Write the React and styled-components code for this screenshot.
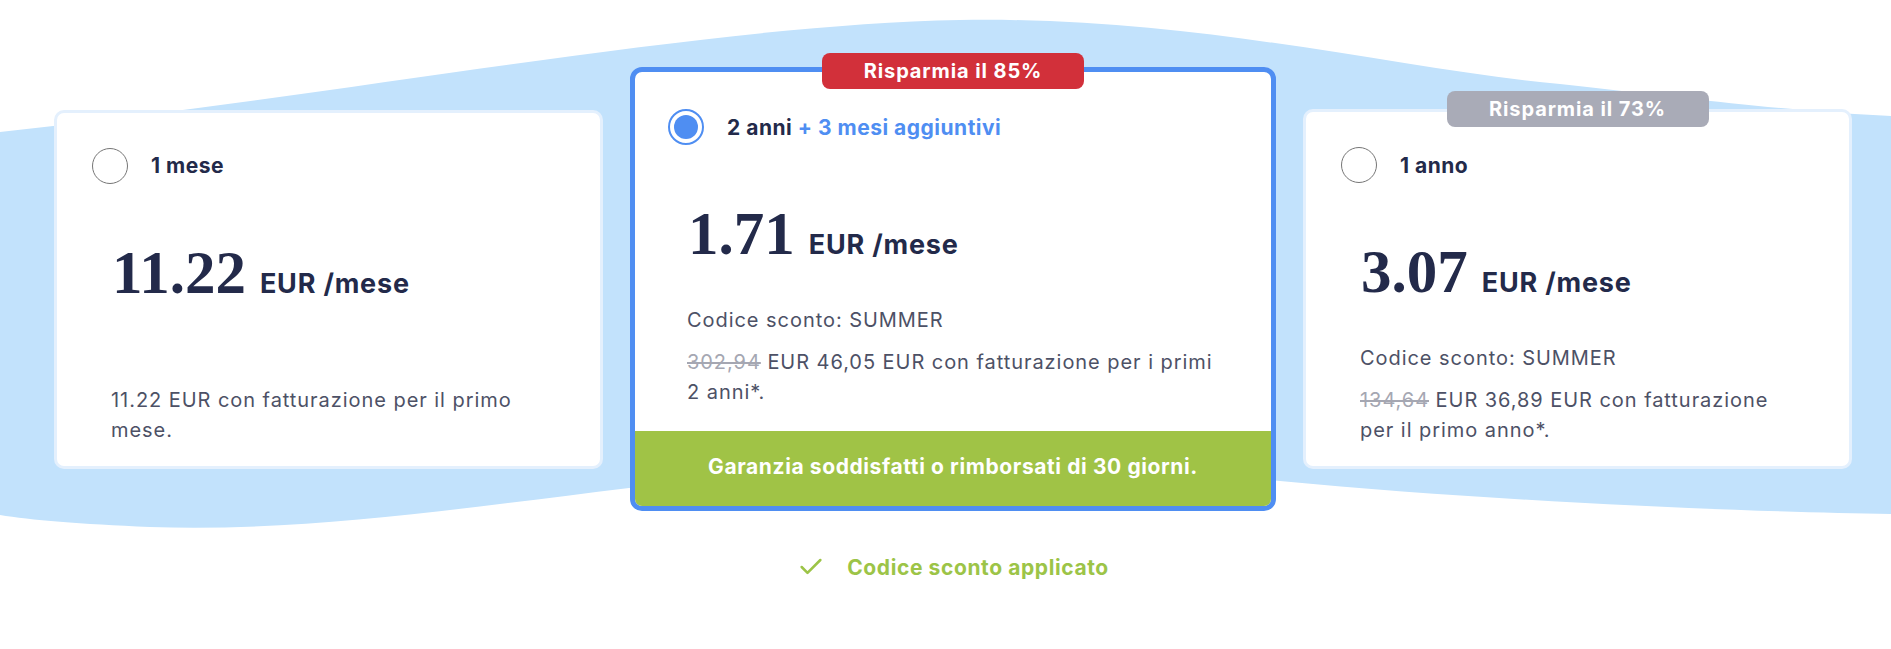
import React from "react";
import styled, { createGlobalStyle } from "styled-components";
import { Check } from "lucide-react";

const GlobalStyle = createGlobalStyle`
  * {
    box-sizing: border-box;
  }
  body {
    margin: 0;
    background: #fff;
    font-family: Inter, "Noto Sans", sans-serif;
    color: #232a4a;
  }
`;

const Page = styled.div`
  position: relative;
  height: 649px;
  overflow: hidden;
`;

// soft blue band that sweeps behind the plan cards
const Wave = styled.svg`
  position: absolute;
  inset: 0;
  width: 100%;
  height: 100%;
  z-index: 0;
`;

const Main = styled.div`
  position: relative;
  z-index: 1;
  width: fit-content;
  padding: 67px 0 0 54px;
`;

const Plans = styled.div`
  display: grid;
  grid-template-columns: 549px 646px 549px;
  column-gap: 27px;
  align-items: center;
`;

const Card = styled.div`
  position: relative;
  display: flex;
  flex-direction: column;
  min-height: ${(p) => (p.$selected ? "0" : "359px")};
  background: #fff;
  border: ${(p) => (p.$selected ? "5px solid #4f8ef2" : "3px solid #e4f0fd")};
  border-radius: ${(p) => (p.$selected ? "12px" : "10px")};
`;

const Badge = styled.div`
  position: absolute;
  top: ${(p) => (p.$tone === "red" ? "-19px" : "-21px")};
  left: 50%;
  transform: translateX(-50%);
  width: 262px;
  height: 36px;
  border-radius: 8px;
  background: ${(p) => (p.$tone === "red" ? "#d2303a" : "#a9abb7")};
  color: #fff;
  font-size: 20px;
  font-weight: 700;
  letter-spacing: 0.9px;
  display: flex;
  align-items: center;
  justify-content: center;
`;

const Content = styled.div`
  flex: 1;
  display: flex;
  flex-direction: column;
  padding: ${(p) => (p.$selected ? "37px 48px 24px 33px" : "35px 45px 21px 35px")};
`;

const Header = styled.label`
  display: flex;
  align-items: center;
  gap: 23px;
  height: 36px;
`;

const Radio = styled.span`
  flex: none;
  width: 36px;
  height: 36px;
  border-radius: 50%;
  border: ${(p) => (p.$checked ? "2px solid #4f8ef2" : "1.5px solid #767676")};
  display: grid;
  place-items: center;
  &::after {
    content: "";
    width: 24px;
    height: 24px;
    border-radius: 50%;
    background: ${(p) => (p.$checked ? "#4f8ef2" : "transparent")};
  }
`;

const Title = styled.span`
  font-size: 21px;
  font-weight: 700;
  letter-spacing: 0.5px;
  color: #232a4a;
`;

const Extra = styled.span`
  color: #4f8ef2;
`;

const PriceRow = styled.div`
  display: flex;
  align-items: baseline;
  gap: 14px;
  margin-top: 58px;
  padding-left: 20px;
  color: #232a4a;
`;

const Amount = styled.span`
  font-family: "Liberation Serif", "DejaVu Serif", serif;
  font-size: 61px;
  font-weight: 700;
  line-height: 1;
`;

const Unit = styled.span`
  font-size: 27px;
  font-weight: 700;
  letter-spacing: 0.8px;
  line-height: 1;
`;

const Details = styled.div`
  margin-top: ${(p) => (p.$bottom ? "auto" : "41px")};
  padding-left: 19px;
`;

const Line = styled.p`
  margin: 0;
  font-size: 20px;
  line-height: 30px;
  letter-spacing: 0.95px;
  color: #4d5166;
  & + & {
    margin-top: 12px;
  }
`;

const Old = styled.s`
  color: #a5a7b2;
`;

const Guarantee = styled.div`
  height: 75px;
  padding-bottom: 4px;
  border-radius: 0 0 7px 7px;
  background: #a0c346;
  color: #fff;
  font-size: 21px;
  font-weight: 700;
  letter-spacing: 0.6px;
  display: flex;
  align-items: center;
  justify-content: center;
`;

const Applied = styled.div`
  display: flex;
  align-items: center;
  justify-content: center;
  gap: 22px;
  margin-top: 42px;
  color: #9cc447;
  font-size: 21px;
  font-weight: 700;
  letter-spacing: 0.6px;
`;

const plans = [
  {
    id: "1m",
    title: "1 mese",
    price: "11.22",
    lines: [{ text: "11.22 EUR con fatturazione per il primo mese." }],
  },
  {
    id: "27m",
    title: "2 anni",
    extra: "+ 3 mesi aggiuntivi",
    price: "1.71",
    badge: { text: "Risparmia il 85%", tone: "red" },
    selected: true,
    lines: [
      { text: "Codice sconto: SUMMER" },
      { old: "302,94", text: " EUR 46,05 EUR con fatturazione per i primi 2 anni*." },
    ],
  },
  {
    id: "12m",
    title: "1 anno",
    price: "3.07",
    badge: { text: "Risparmia il 73%", tone: "grey" },
    lines: [
      { text: "Codice sconto: SUMMER" },
      { old: "134,64", text: " EUR 36,89 EUR con fatturazione per il primo anno*." },
    ],
  },
];

function PlanCard({ plan }) {
  const { title, extra, price, badge, selected, lines } = plan;
  return (
    <Card $selected={selected}>
      {badge && <Badge $tone={badge.tone}>{badge.text}</Badge>}
      <Content $selected={selected}>
        <Header>
          <Radio $checked={selected} />
          <Title>
            {title} {extra && <Extra>{extra}</Extra>}
          </Title>
        </Header>
        <PriceRow>
          <Amount>{price}</Amount>
          <Unit>EUR /mese</Unit>
        </PriceRow>
        <Details $bottom={lines.length === 1}>
          {lines.map((l, i) => (
            <Line key={i}>
              {l.old && <Old>{l.old}</Old>}
              {l.text}
            </Line>
          ))}
        </Details>
      </Content>
      {selected && <Guarantee>Garanzia soddisfatti o rimborsati di 30 giorni.</Guarantee>}
    </Card>
  );
}

export default function App() {
  return (
    <Page>
      <GlobalStyle />
      <Wave viewBox="0 0 1891 649" preserveAspectRatio="none">
        <path
          fill="#c2e2fc"
          d="M0,132 C350,95 700,25 960,20 C1200,16 1400,70 1560,84 C1700,100 1800,112 1891,116
             L1891,514 C1750,512 1500,502 1280,481 C1100,462 800,468 629,488
             C450,510 300,532 150,527 C80,524 30,520 0,515 Z"
        />
      </Wave>
      <Main>
        <Plans>
          {plans.map((p) => (
            <PlanCard key={p.id} plan={p} />
          ))}
        </Plans>
        <Applied>
          <Check size={28} strokeWidth={2.2} />
          Codice sconto applicato
        </Applied>
      </Main>
    </Page>
  );
}
